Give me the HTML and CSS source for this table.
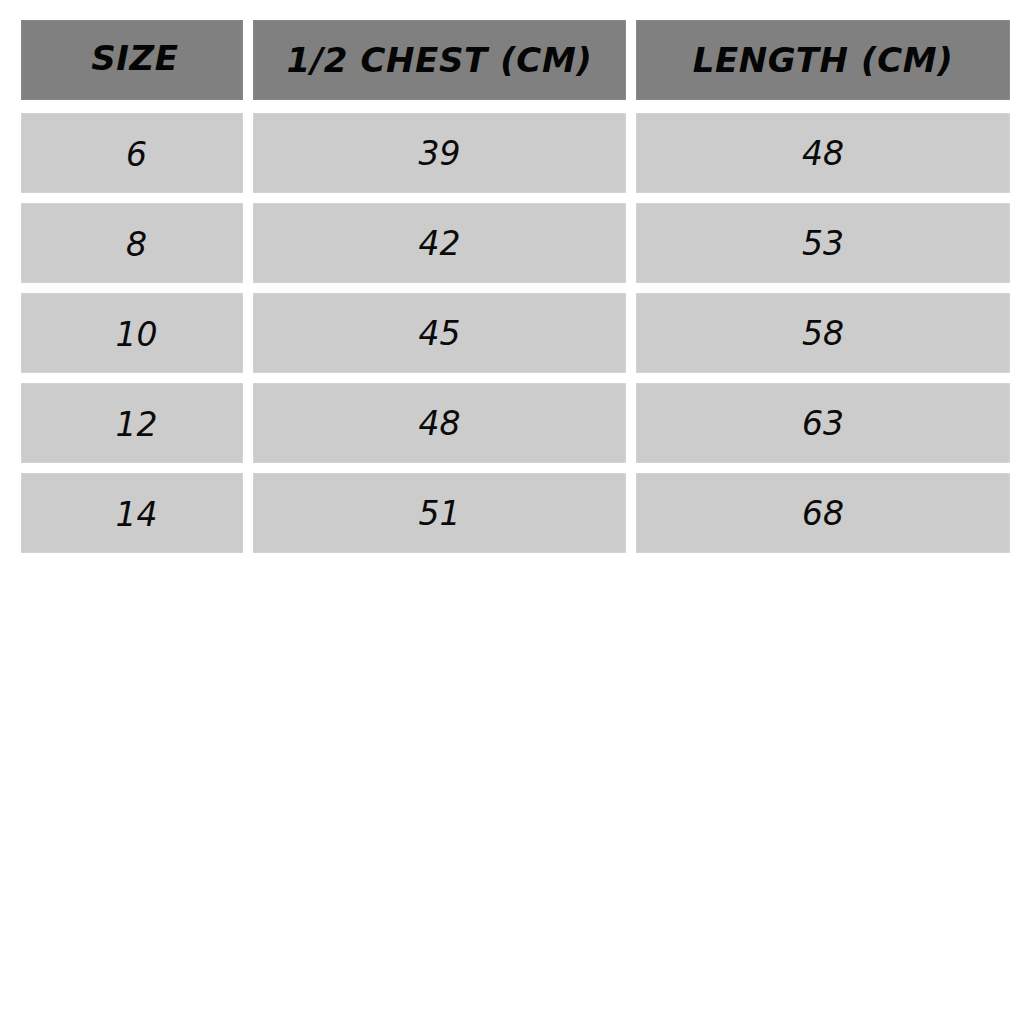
FILE: index.html
```html
<!DOCTYPE html>
<html>
<head>
<meta charset="utf-8">
<link rel="stylesheet" href="styles.css">
</head>
<body>
<div class="table">
  <div class="row head">
    <div class="cell first">SIZE</div>
    <div class="cell">1/2 CHEST (CM)</div>
    <div class="cell">LENGTH (CM)</div>
  </div>
  <div class="row">
    <div class="cell first">6</div>
    <div class="cell">39</div>
    <div class="cell">48</div>
  </div>
  <div class="row">
    <div class="cell first">8</div>
    <div class="cell">42</div>
    <div class="cell">53</div>
  </div>
  <div class="row">
    <div class="cell first">10</div>
    <div class="cell">45</div>
    <div class="cell">58</div>
  </div>
  <div class="row">
    <div class="cell first">12</div>
    <div class="cell">48</div>
    <div class="cell">63</div>
  </div>
  <div class="row">
    <div class="cell first">14</div>
    <div class="cell">51</div>
    <div class="cell">68</div>
  </div>
</div>
</body>
</html>
```
FILE: styles.css
```css
html, body {
  margin: 0;
  padding: 0;
  background: #ffffff;
}
body {
  padding: 20px 0 0 21px;
  font-family: "DejaVu Sans", Verdana, sans-serif;
}
.table {
  display: flex;
  flex-direction: column;
  gap: 10px;
  width: 989px;
}
.row {
  display: grid;
  grid-template-columns: 222px 373px 374px;
  column-gap: 10px;
  height: 80px;
}
.cell {
  display: flex;
  align-items: center;
  justify-content: center;
  background: #cccccc;
  border: 1px solid #d3d3d3;
  box-sizing: border-box;
  font-style: italic;
  font-size: 33px;
  color: #0a0a0a;
}
.cell.first {
  padding-left: 9px;
  padding-top: 2px;
}
.head {
  margin-bottom: 3px;
}
.head .cell {
  background: #808080;
  border-color: #8a8a8a;
  font-weight: bold;
  font-size: 34px;
  letter-spacing: 0.6px;
  color: #050505;
}
.head .cell.first {
  padding-left: 6px;
  padding-top: 0;
  padding-bottom: 4px;
}
```
